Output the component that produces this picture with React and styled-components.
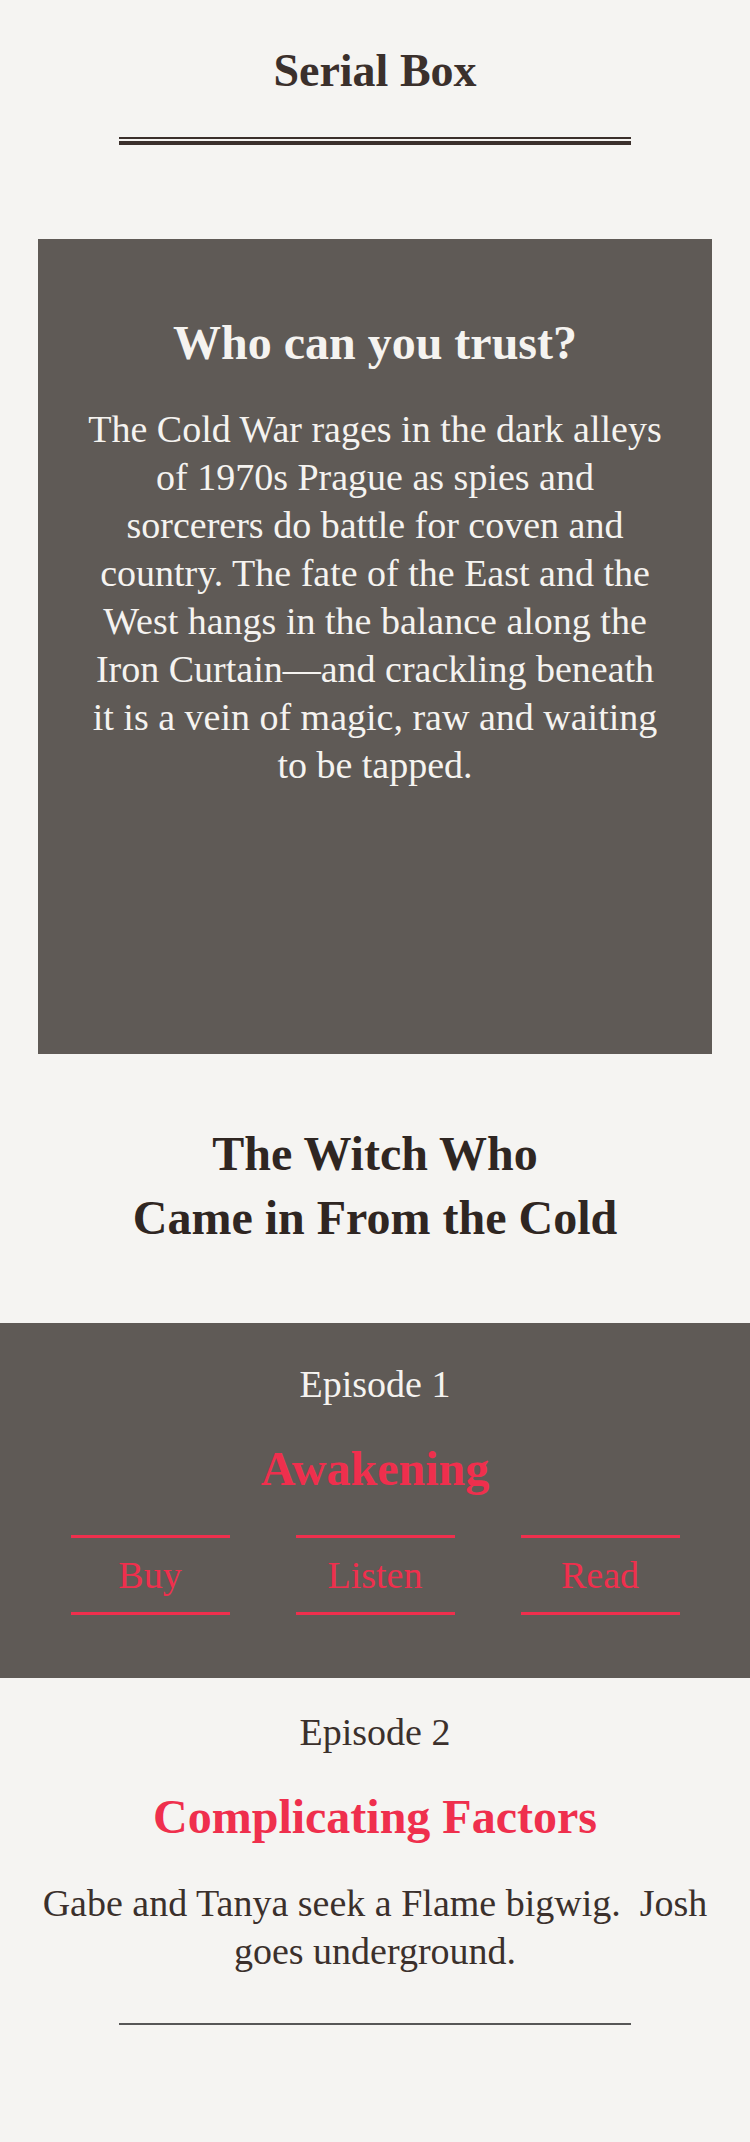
import styled, { createGlobalStyle } from "styled-components";

const GlobalStyle = createGlobalStyle`
  html, body {
    margin: 0;
    padding: 0;
    background: #f5f4f2;
  }
  body {
    font-family: "Liberation Serif", "Times New Roman", serif;
    color: #3b302c;
  }
`;

// line breaks kept as in the original layout
const promoLines = [
  "The Cold War rages in the dark alleys",
  "of 1970s Prague as spies and",
  "sorcerers do battle for coven and",
  "country. The fate of the East and the",
  "West hangs in the balance along the",
  "Iron Curtain—and crackling beneath",
  "it is a vein of magic, raw and waiting",
  "to be tapped.",
];

const episodes = [
  {
    number: 1,
    title: "Awakening",
    links: ["Buy", "Listen", "Read"],
  },
  {
    number: 2,
    title: "Complicating Factors",
    summary: "Gabe and Tanya seek a Flame bigwig.\u00a0 Josh goes underground.",
  },
];

const App = () => {
  return (
    <Page>
      <GlobalStyle />
      <Header>
        <Logo>Serial Box</Logo>
        <DoubleRule />
      </Header>

      <Promo>
        <PromoTitle>Who can you trust?</PromoTitle>
        <PromoText>
          {promoLines.map((line) => (
            <PromoLine key={line}>{line}</PromoLine>
          ))}
        </PromoText>
      </Promo>

      <SeriesTitle>
        The Witch Who
        <br />
        Came in From the Cold
      </SeriesTitle>

      {episodes.map((ep) => (
        <Episode key={ep.number} $dark={!!ep.links}>
          <EpisodeLabel $dark={!!ep.links}>Episode {ep.number}</EpisodeLabel>
          <EpisodeTitle>{ep.title}</EpisodeTitle>
          {ep.links && (
            <Actions>
              {ep.links.map((label) => (
                <ActionLink key={label} href="#">
                  {label}
                </ActionLink>
              ))}
            </Actions>
          )}
          {ep.summary && <Summary>{ep.summary}</Summary>}
        </Episode>
      ))}

      <Footer>
        <Rule />
      </Footer>
    </Page>
  );
};

export default App;

const Page = styled.div`
  width: 750px;
  min-height: 2142px;
  background: #f5f4f2;
  display: flex;
  flex-direction: column;
  align-items: stretch;
`;

const Header = styled.header`
  display: flex;
  flex-direction: column;
  align-items: center;
  padding-top: 43px;
`;

const Logo = styled.h1`
  margin: 0;
  font-size: 46px;
  line-height: 56px;
  font-weight: 700;
  color: #3b302c;
`;

const DoubleRule = styled.div`
  margin-top: 38px;
  width: 512px;
  height: 2px;
  border-top: 2px solid #3b302c;
  border-bottom: 4px solid #3b302c;
`;

const Promo = styled.section`
  margin: 94px 38px 0;
  min-height: 815px;
  box-sizing: border-box;
  padding: 75px 30px 40px;
  background: #5f5a56;
  color: #f5f3f0;
  text-align: center;
`;

const PromoTitle = styled.h2`
  margin: 0;
  font-size: 48px;
  line-height: 58px;
  font-weight: 700;
`;

const PromoText = styled.p`
  margin: 33px 0 0;
  font-size: 38px;
  line-height: 48px;
`;

const PromoLine = styled.span`
  display: block;
  white-space: nowrap;
`;

const SeriesTitle = styled.h2`
  margin: 68px 0 0;
  font-size: 48px;
  line-height: 64px;
  font-weight: 700;
  text-align: center;
  color: #2f2622;
`;

const Episode = styled.section`
  margin-top: ${(p) => (p.$dark ? "73px" : "0")};
  padding: ${(p) => (p.$dark ? "37px 30px 63px" : "30px 30px 0")};
  background: ${(p) => (p.$dark ? "#5f5a56" : "transparent")};
  text-align: center;
`;

const EpisodeLabel = styled.div`
  font-size: 38px;
  line-height: 48px;
  color: ${(p) => (p.$dark ? "#f5f3f0" : "#3b302c")};
`;

const EpisodeTitle = styled.h3`
  margin: 32px 0 0;
  font-size: 48px;
  line-height: 58px;
  font-weight: 700;
  color: #ef2f4d;
`;

const Actions = styled.div`
  margin-top: 37px;
  display: flex;
  justify-content: center;
  gap: 66px;
`;

const ActionLink = styled.a`
  width: 159px;
  border-top: 3px solid #ef2f4d;
  border-bottom: 3px solid #ef2f4d;
  font-size: 38px;
  line-height: 74px;
  color: #ef2f4d;
  text-decoration: none;
`;

const Summary = styled.p`
  margin: 33px 0 0;
  font-size: 38px;
  line-height: 48px;
  color: #3b302c;
`;

const Footer = styled.footer`
  display: flex;
  justify-content: center;
  padding: 48px 0 116px;
`;

const Rule = styled.div`
  width: 512px;
  height: 2px;
  background: #575757;
`;
